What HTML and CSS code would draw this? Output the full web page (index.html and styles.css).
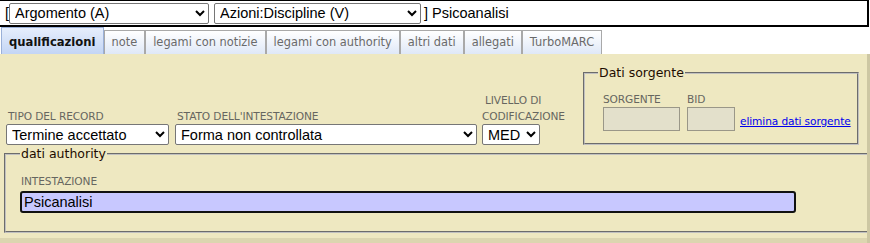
FILE: index.html
```html
<!DOCTYPE html>
<html lang="it">
<head>
<meta charset="utf-8">
<title>Authority</title>
<link rel="stylesheet" href="styles.css">
</head>
<body>
<div class="header">
  <span class="bracket">[</span>
  <select class="sel sel-a"><option>Argomento (A)</option></select>
  <select class="sel sel-b"><option>Azioni:Discipline (V)</option></select>
  <span class="title">] Psicoanalisi</span>
</div>
<div class="tabs">
  <div class="tab active">qualificazioni</div>
  <div class="tab">note</div>
  <div class="tab">legami con notizie</div>
  <div class="tab">legami con authority</div>
  <div class="tab">altri dati</div>
  <div class="tab">allegati</div>
  <div class="tab">TurboMARC</div>
</div>
<div class="panel">
  <div class="toprow">
    <div class="field f1">
      <label class="lbl">TIPO DEL RECORD</label>
      <select class="sel w1"><option>Termine accettato</option></select>
    </div>
    <div class="field f2">
      <label class="lbl">STATO DELL'INTESTAZIONE</label>
      <select class="sel w2"><option>Forma non controllata</option></select>
    </div>
    <div class="field f3">
      <label class="lbl lbl2"><span class="ind">LIVELLO DI</span><br>CODIFICAZIONE</label>
      <select class="sel w3"><option>MED</option></select>
    </div>
    <fieldset class="fs-src">
      <legend class="lg">Dati sorgente</legend>
      <div class="src-row">
        <div class="src-field">
          <label class="lbl">SORGENTE</label>
          <input class="ro w-src" type="text" readonly>
        </div>
        <div class="src-field">
          <label class="lbl">BID</label>
          <input class="ro w-bid" type="text" readonly>
        </div>
        <a class="link" href="#">elimina dati sorgente</a>
      </div>
    </fieldset>
  </div>
  <fieldset class="fs-auth">
    <legend class="lg">dati authority</legend>
    <label class="lbl lbl-int">INTESTAZIONE</label>
    <input class="int" type="text" value="Psicanalisi">
  </fieldset>
</div>
<div class="bottom-strip"></div>
</body>
</html>
```

FILE: styles.css
```css
html, body {
  margin: 0;
  padding: 0;
  background: #ffffff;
}
body {
  width: 870px;
  height: 243px;
  overflow: hidden;
  font-family: "Liberation Sans", Arial, sans-serif;
}
.header {
  height: 24px;
  border-top: 1px solid #000;
  border-right: 2px solid #000;
  border-bottom: 2px solid #000;
  display: flex;
  align-items: center;
  font-size: 14.5px;
  color: #000;
  width: 867px;
}
.bracket {
  margin-left: 5px;
}
.sel {
  font-family: "Liberation Sans", Arial, sans-serif;
  font-size: 14.5px;
  height: 21px;
  background: #fff;
  color: #000;
  border: 1px solid #767676;
  border-radius: 2px;
  padding: 0 0 0 1px;
  margin: 0;
}
.sel-a { width: 200px; }
.sel-b { width: 207px; margin-left: 5px; }
.title { margin-left: 3px; }

.tabs {
  display: flex;
  align-items: flex-end;
  height: 27px;
  padding-left: 1px;
}
.tab {
  font-family: "DejaVu Sans", Verdana, sans-serif;
  font-size: 11.4px;
  color: #6a6a6a;
  height: 24px;
  line-height: 23px;
  padding: 0 7px;
  border: 1px solid #a9a9a9;
  border-bottom: none;
  background: linear-gradient(#ffffff, #dfe8f7);
  box-sizing: border-box;
}
.tab.active {
  height: 27px;
  line-height: 28px;
  font-weight: bold;
  color: #111;
  font-size: 11.6px;
  border-color: #9ab0d8;
  background: linear-gradient(#e6eefc, #c3d5f5);
}

.panel {
  height: 184px;
  background: #eee8c1;
  border-right: 3px solid #cdc7a3;
  box-sizing: border-box;
  padding: 11px 0 0 6px;
  overflow: hidden;
}
.toprow {
  display: flex;
  align-items: flex-end;
}
.field {
  display: flex;
  flex-direction: column;
}
.f1 { margin-right: 6px; }
.f2 { margin-right: 5px; }
.lbl {
  font-family: "DejaVu Sans", Verdana, sans-serif;
  font-size: 10.6px;
  color: #666660;
  line-height: 16px;
  padding-left: 2px;
  letter-spacing: -0.1px;
}
.lbl2 { padding-left: 0; }
.ind { padding-left: 3px; }
.w1 { width: 163px; }
.w2 { width: 302px; }
.w3 { width: 58px; }

.fs-src {
  margin: 0 8px 0 auto;
  border: 2px groove #c0c0c0;
  padding: 0 6px 12px 18px;
  box-sizing: border-box;
  width: 276px;
}
.lg {
  font-family: "DejaVu Sans", Verdana, sans-serif;
  font-size: 12.5px;
  color: #1d0c00;
  padding: 0 1px;
  margin-left: 0;
}
.fs-src .lg { margin-left: -5px; }
.src-row {
  display: flex;
  align-items: flex-end;
  margin-top: 12px;
}
.src-field {
  display: flex;
  flex-direction: column;
}
.src-field .lbl { padding-left: 0; line-height: 15px; }
.ro {
  height: 24px;
  box-sizing: border-box;
  background: #e3e0cb;
  border: 1px solid #9a9788;
  margin: 0;
  padding: 0;
}
.w-src { width: 77px; margin-right: 7px; }
.w-bid { width: 48px; margin-right: 5px; }
.link {
  font-family: "DejaVu Sans", Verdana, sans-serif;
  font-size: 10.6px;
  color: #0000ee;
  text-decoration: underline;
  margin-bottom: 4px;
  letter-spacing: -0.1px;
}

.fs-auth {
  margin: 1px -40px 0 -2px;
  border: 2px groove #c0c0c0;
  padding: 12px 0 0 14px;
  box-sizing: border-box;
  height: 87px;
  display: flex;
  flex-direction: column;
  align-items: flex-start;
}
.lbl-int { padding-left: 1px; line-height: 16px; }
.int {
  margin-top: 2px;
  width: 776px;
  height: 22px;
  box-sizing: border-box;
  background: #c8c8ff;
  border: 2px solid #111;
  border-radius: 3px;
  font-family: "Liberation Sans", Arial, sans-serif;
  font-size: 14.5px;
  padding: 0 2px;
  color: #000;
}
.bottom-strip {
  height: 5px;
  background: #dcd6b0;
  border-right: 3px solid #cdc7a3;
}
```
